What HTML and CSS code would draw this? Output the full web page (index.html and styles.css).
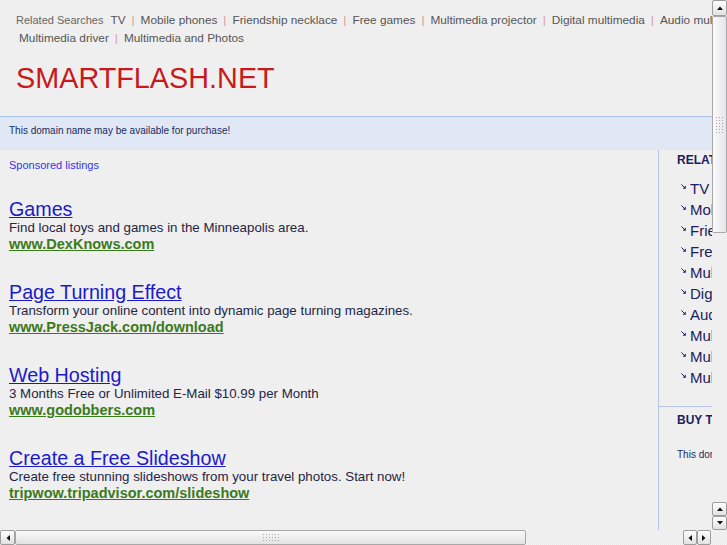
FILE: index.html
```html
<!DOCTYPE html>
<html>
<head>
<meta charset="utf-8">
<title>smartflash.net</title>
<link rel="stylesheet" href="styles.css">
</head>
<body>
<div class="page">
  <header class="top">
    <div class="rel-line">
      <span class="rel-label">Related Searches</span><a href="#">TV</a><span class="sep">|</span><a href="#">Mobile phones</a><span class="sep">|</span><a href="#">Friendship necklace</a><span class="sep">|</span><a href="#">Free games</a><span class="sep">|</span><a href="#">Multimedia projector</a><span class="sep">|</span><a href="#">Digital multimedia</a><span class="sep">|</span><a href="#">Audio multimedia</a><span class="sep">|</span><a href="#">Multimedia software</a>
    </div>
    <div class="rel-line second">
      <a href="#">Multimedia driver</a><span class="sep">|</span><a href="#">Multimedia and Photos</a>
    </div>
    <h1 class="site">SMARTFLASH.NET</h1>
  </header>

  <div class="notice">This domain name may be available for purchase!</div>

  <div class="content">
    <main class="main">
      <div class="sponsored">Sponsored listings</div>

      <div class="listing">
        <a class="title" href="#">Games</a>
        <div class="desc">Find local toys and games in the Minneapolis area.</div>
        <a class="url" href="#">www.DexKnows.com</a>
      </div>

      <div class="listing">
        <a class="title" href="#">Page Turning Effect</a>
        <div class="desc">Transform your online content into dynamic page turning magazines.</div>
        <a class="url" href="#">www.PressJack.com/download</a>
      </div>

      <div class="listing">
        <a class="title" href="#">Web Hosting</a>
        <div class="desc">3 Months Free or Unlimited E-Mail $10.99 per Month</div>
        <a class="url" href="#">www.godobbers.com</a>
      </div>

      <div class="listing">
        <a class="title" href="#">Create a Free Slideshow</a>
        <div class="desc">Create free stunning slideshows from your travel photos. Start now!</div>
        <a class="url" href="#">tripwow.tripadvisor.com/slideshow</a>
      </div>
    </main>

    <aside class="side">
      <div class="side-block related-block">
        <h3 class="side-title">RELATED SEARCHES</h3>
        <ul class="side-list">
          <li><svg class="arrow" viewBox="0 0 5 5"><path d="M0.4 0.4 L3 3" stroke="#1b2160" stroke-width="1" fill="none"/><path d="M4.8 1.6 L4.8 4.8 L1.6 4.8 Z" fill="#1b2160"/></svg>TV</li>
          <li><svg class="arrow" viewBox="0 0 5 5"><path d="M0.4 0.4 L3 3" stroke="#1b2160" stroke-width="1" fill="none"/><path d="M4.8 1.6 L4.8 4.8 L1.6 4.8 Z" fill="#1b2160"/></svg>Mobile phones</li>
          <li><svg class="arrow" viewBox="0 0 5 5"><path d="M0.4 0.4 L3 3" stroke="#1b2160" stroke-width="1" fill="none"/><path d="M4.8 1.6 L4.8 4.8 L1.6 4.8 Z" fill="#1b2160"/></svg>Friendship necklace</li>
          <li><svg class="arrow" viewBox="0 0 5 5"><path d="M0.4 0.4 L3 3" stroke="#1b2160" stroke-width="1" fill="none"/><path d="M4.8 1.6 L4.8 4.8 L1.6 4.8 Z" fill="#1b2160"/></svg>Free games</li>
          <li><svg class="arrow" viewBox="0 0 5 5"><path d="M0.4 0.4 L3 3" stroke="#1b2160" stroke-width="1" fill="none"/><path d="M4.8 1.6 L4.8 4.8 L1.6 4.8 Z" fill="#1b2160"/></svg>Multimedia projector</li>
          <li><svg class="arrow" viewBox="0 0 5 5"><path d="M0.4 0.4 L3 3" stroke="#1b2160" stroke-width="1" fill="none"/><path d="M4.8 1.6 L4.8 4.8 L1.6 4.8 Z" fill="#1b2160"/></svg>Digital multimedia</li>
          <li><svg class="arrow" viewBox="0 0 5 5"><path d="M0.4 0.4 L3 3" stroke="#1b2160" stroke-width="1" fill="none"/><path d="M4.8 1.6 L4.8 4.8 L1.6 4.8 Z" fill="#1b2160"/></svg>Audio multimedia</li>
          <li><svg class="arrow" viewBox="0 0 5 5"><path d="M0.4 0.4 L3 3" stroke="#1b2160" stroke-width="1" fill="none"/><path d="M4.8 1.6 L4.8 4.8 L1.6 4.8 Z" fill="#1b2160"/></svg>Multimedia software</li>
          <li><svg class="arrow" viewBox="0 0 5 5"><path d="M0.4 0.4 L3 3" stroke="#1b2160" stroke-width="1" fill="none"/><path d="M4.8 1.6 L4.8 4.8 L1.6 4.8 Z" fill="#1b2160"/></svg>Multimedia driver</li>
          <li><svg class="arrow" viewBox="0 0 5 5"><path d="M0.4 0.4 L3 3" stroke="#1b2160" stroke-width="1" fill="none"/><path d="M4.8 1.6 L4.8 4.8 L1.6 4.8 Z" fill="#1b2160"/></svg>Multimedia and Photos</li>
        </ul>
      </div>
      <div class="side-block buy-block">
        <h3 class="side-title">BUY THIS DOMAIN</h3>
        <p class="buy-text">This domain name may be available for purchase!</p>
      </div>
    </aside>
  </div>
</div>

<div class="vscroll">
  <div class="sb-btn tall"><svg class="tri" viewBox="0 0 6 4"><path d="M0 4 L3 0.5 L6 4 Z" fill="#111"/></svg></div>
  <div class="thumb vthumb"><span class="grip vgrip"></span></div>
  <div class="sb-space"></div>
  <div class="sb-btn"><svg class="tri" viewBox="0 0 6 4"><path d="M0 4 L3 0.5 L6 4 Z" fill="#111"/></svg></div>
  <div class="sb-btn"><svg class="tri" viewBox="0 0 6 4"><path d="M0 0 L3 3.5 L6 0 Z" fill="#111"/></svg></div>
</div>

<div class="hscroll">
  <div class="sb-btn wide"><svg class="tri-h" viewBox="0 0 4 6"><path d="M4 0 L0.5 3 L4 6 Z" fill="#111"/></svg></div>
  <div class="thumb hthumb"><span class="grip hgrip"></span></div>
  <div class="sb-space"></div>
  <div class="sb-btn"><svg class="tri-h" viewBox="0 0 4 6"><path d="M4 0 L0.5 3 L4 6 Z" fill="#111"/></svg></div>
  <div class="sb-btn"><svg class="tri-h" viewBox="0 0 4 6"><path d="M0 0 L3.5 3 L0 6 Z" fill="#111"/></svg></div>
</div>

<div class="sb-corner"></div>
</body>
</html>
```

FILE: styles.css
```css
* { box-sizing: border-box; }

html, body {
  margin: 0;
  padding: 0;
  height: 100%;
  overflow: hidden;
}

body {
  background: #efefef;
  font-family: "Liberation Sans", Arial, sans-serif;
  color: #222;
}

.page {
  width: 900px;
}

/* header */
.top {
  padding: 11px 0 0 16px;
}

.rel-line {
  font-size: 11.8px;
  line-height: 18px;
  white-space: nowrap;
  color: #555;
}

.rel-line.second {
  padding-left: 3px;
}

.rel-label {
  font-size: 11px;
  color: #666;
  margin-right: 7px;
}

.rel-line a {
  color: #555;
  text-decoration: none;
}

.sep {
  color: #d49b9b;
  margin: 0 6px;
}

.site {
  margin: 14px 0 0;
  font-size: 28.8px;
  line-height: 34px;
  font-weight: normal;
  color: #c8191b;
}

/* notice bar */
.notice {
  margin-top: 21px;
  border-top: 1px solid #a9c1e8;
  background: #e0e7f5;
  padding: 7px 9px 12px;
  font-size: 10px;
  line-height: 14px;
  color: #1b2a5c;
}

/* content */
.content {
  display: flex;
  height: 380px;
}

.main {
  flex: 0 0 658px;
  padding: 8px 0 0 9px;
}

.sponsored {
  font-size: 11px;
  line-height: 14px;
  color: #3434ee;
}

.listing {
  margin-top: 29px;
}

.sponsored + .listing {
  margin-top: 26px;
}

.title {
  display: block;
  width: max-content;
  font-size: 19.7px;
  line-height: 22px;
  color: #1a1acc;
  text-decoration: underline;
}

.desc {
  font-size: 13.3px;
  line-height: 16px;
  color: #1f2545;
}

.url {
  display: block;
  width: max-content;
  font-size: 14.5px;
  line-height: 16px;
  font-weight: bold;
  color: #3b7a1c;
  text-decoration: underline;
}

/* sidebar */
.side {
  flex: 0 0 240px;
  border-left: 1px solid #b5c6ea;
}

.side-block {
  padding-left: 18px;
}

.related-block {
  padding-top: 3px;
  padding-bottom: 18px;
  border-bottom: 1px solid #b5c6ea;
}

.side-title {
  margin: 0;
  font-size: 12px;
  line-height: 14px;
  font-weight: bold;
  color: #1b2160;
  white-space: nowrap;
}

.side-list {
  list-style: none;
  margin: 11px 0 0;
  padding: 0 0 0 4px;
}

.side-list li {
  display: flex;
  align-items: center;
  font-size: 15px;
  line-height: 21px;
  color: #1b2160;
  white-space: nowrap;
}

.arrow {
  width: 5px;
  height: 5px;
  margin-right: 4px;
  margin-top: -5px;
  flex: none;
}

.buy-block {
  padding-top: 6px;
}

.buy-text {
  margin: 21px 0 0;
  font-size: 10px;
  line-height: 13px;
  color: #1b2a5c;
  white-space: nowrap;
}

/* fake GTK scrollbars */
.vscroll,
.hscroll,
.sb-corner {
  position: fixed;
  background: repeating-conic-gradient(#f6f6f6 0 25%, #e9e9e9 0 50%) 0 0 / 2px 2px;
}

.vscroll {
  top: 0;
  right: 0;
  width: 15px;
  height: 530px;
  display: flex;
  flex-direction: column;
}

.hscroll {
  left: 0;
  bottom: 0;
  width: 712px;
  height: 15px;
  display: flex;
  padding-right: 1px;
}

.sb-corner {
  right: 0;
  bottom: 0;
  width: 15px;
  height: 15px;
}

.sb-btn {
  flex: 0 0 14px;
  width: 15px;
  height: 14px;
  border: 1px solid #9d9d9d;
  border-radius: 2px;
  background: linear-gradient(#fefefe, #e2e2e2);
  display: flex;
  align-items: center;
  justify-content: center;
}

.vscroll .sb-btn.tall {
  flex-basis: 16px;
  height: 16px;
}

.hscroll .sb-btn {
  width: 14px;
  height: 15px;
}

.hscroll .sb-btn.wide {
  flex-basis: 15px;
  width: 15px;
}

.tri {
  width: 6px;
  height: 4px;
}

.tri-h {
  width: 4px;
  height: 6px;
}

.thumb {
  border: 1px solid #a8a8a8;
  border-radius: 2px;
  display: flex;
  align-items: center;
  justify-content: center;
}

.vthumb {
  flex: 0 0 217px;
  background: linear-gradient(90deg, #fafafa, #e6e6ea);
}

.hthumb {
  flex: 0 0 511px;
  background: linear-gradient(#fafafa, #e2e2e2);
}

.sb-space {
  flex: 1;
}

.grip {
  display: block;
  background: radial-gradient(circle, #a9a9a9 0.7px, transparent 1px) 0 0 / 3px 3px;
}

.vgrip {
  width: 9px;
  height: 17px;
}

.hgrip {
  width: 17px;
  height: 9px;
}
```
